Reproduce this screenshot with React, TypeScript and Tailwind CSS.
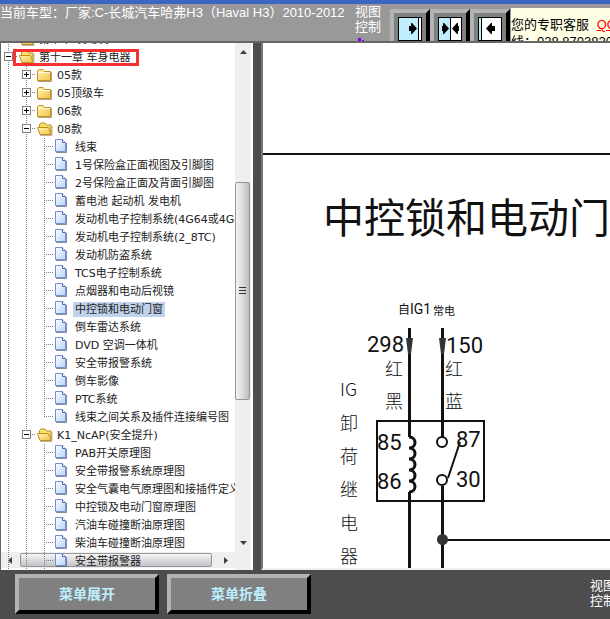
import type { ReactNode } from 'react';

type TreeKind = 'closed' | 'open' | 'file';

type TreeRow = {
  label: string;
  level: 0 | 1 | 2;
  kind: TreeKind;
  selected?: boolean;
  marked?: boolean;
  last?: boolean;
};

const rows: TreeRow[] = [
  { label: '第十章 发动机2008', level: 0, kind: 'open' },
  { label: '第十一章 车身电器', level: 0, kind: 'open', marked: true },
  { label: '05款', level: 1, kind: 'closed' },
  { label: '05顶级车', level: 1, kind: 'closed' },
  { label: '06款', level: 1, kind: 'closed' },
  { label: '08款', level: 1, kind: 'open' },
  { label: '线束', level: 2, kind: 'file' },
  { label: '1号保险盒正面视图及引脚图', level: 2, kind: 'file' },
  { label: '2号保险盒正面及背面引脚图', level: 2, kind: 'file' },
  { label: '蓄电池 起动机 发电机', level: 2, kind: 'file' },
  { label: '发动机电子控制系统(4G64或4G69)', level: 2, kind: 'file' },
  { label: '发动机电子控制系统(2_8TC)', level: 2, kind: 'file' },
  { label: '发动机防盗系统', level: 2, kind: 'file' },
  { label: 'TCS电子控制系统', level: 2, kind: 'file' },
  { label: '点烟器和电动后视镜', level: 2, kind: 'file' },
  { label: '中控锁和电动门窗', level: 2, kind: 'file', selected: true },
  { label: '倒车雷达系统', level: 2, kind: 'file' },
  { label: 'DVD 空调一体机', level: 2, kind: 'file' },
  { label: '安全带报警系统', level: 2, kind: 'file' },
  { label: '倒车影像', level: 2, kind: 'file' },
  { label: 'PTC系统', level: 2, kind: 'file' },
  { label: '线束之间关系及插件连接编号图', level: 2, kind: 'file', last: true },
  { label: 'K1_NcAP(安全提升)', level: 1, kind: 'open' },
  { label: 'PAB开关原理图', level: 2, kind: 'file' },
  { label: '安全带报警系统原理图', level: 2, kind: 'file' },
  { label: '安全气囊电气原理图和接插件定义', level: 2, kind: 'file' },
  { label: '中控锁及电动门窗原理图', level: 2, kind: 'file' },
  { label: '汽油车碰撞断油原理图', level: 2, kind: 'file' },
  { label: '柴油车碰撞断油原理图', level: 2, kind: 'file' },
  { label: '安全带报警器', level: 2, kind: 'file' },
];

function FolderIcon({ open }: { open: boolean }) {
  return (
    <svg width="18" height="18" viewBox="0 0 18 18" className="shrink-0" aria-hidden="true">
      <defs>
        <linearGradient id="folder" x1="0" y1="0" x2="1" y2="1">
          <stop offset="0" stopColor="#fff6b8" />
          <stop offset="1" stopColor="#f3c243" />
        </linearGradient>
      </defs>
      {open ? (
        <>
          <path d="M3.5 13.5v-9L5 3h4l1.5 2H15v8.500z" fill="#f7e070" stroke="#c08f1c" />
          <path d="M4 14.5 1.5 7.5h11l2.500 7z" fill="url(#folder)" stroke="#c08f1c" />
          <path d="M4 15.5h12V6" fill="none" stroke="#7a6848" strokeOpacity="0.5" />
        </>
      ) : (
        <>
          <path d="M1.5 14.5V5L3 3.5h4l1.5 2h6v9z" fill="url(#folder)" stroke="#c08f1c" />
          <path d="M2 6.5h12" stroke="#fffbe0" />
          <path d="M2 15.5h13.5V6" fill="none" stroke="#7a6848" strokeOpacity="0.6" />
        </>
      )}
    </svg>
  );
}

function FileIcon() {
  return (
    <svg width="18" height="18" viewBox="0 0 18 18" className="shrink-0" aria-hidden="true">
      <defs>
        <linearGradient id="page" x1="0" y1="0" x2="1" y2="1">
          <stop offset="0" stopColor="#ffffff" />
          <stop offset="1" stopColor="#b4d4fb" />
        </linearGradient>
      </defs>
      <path d="M1.5 1.5h7l3 3v9h-10z" fill="url(#page)" stroke="#7490d0" />
      <path d="M8.5 1.5v3h3" fill="#ffffff" stroke="#52659f" />
      <path d="M2 14.5h10.5V5" fill="none" stroke="#505878" strokeOpacity="0.7" />
    </svg>
  );
}

function Guide({ row, depth }: { row: TreeRow; depth: number }) {
  const own = depth === row.level;
  const toggle = own && row.kind !== 'file';
  return (
    <svg width="18" height="18" viewBox="0 0 18 18" className="shrink-0" aria-hidden="true">
      <path d={own && row.last ? 'M8.5 0v9' : 'M8.5 0v18'} stroke="#808080" strokeDasharray="1 1" />
      {own ? <path d="M10 8.5h8" stroke="#808080" strokeDasharray="1 1" /> : null}
      {toggle ? (
        <>
          <rect x="4.5" y="4.5" width="8" height="8" fill="#ffffff" stroke="#808080" />
          <path d={row.kind === 'closed' ? 'M6 8.5h5M8.5 6v5' : 'M6 8.5h5'} stroke="#000000" />
        </>
      ) : null}
    </svg>
  );
}

function TreeItem({ row }: { row: TreeRow }) {
  const depths = Array.from({ length: row.level + 1 }, (_, i) => i);
  return (
    <li className="relative flex h-[18px] items-center">
      {depths.map((depth) => (
        <Guide key={depth} row={row} depth={depth} />
      ))}
      {row.kind === 'file' ? <FileIcon /> : <FolderIcon open={row.kind === 'open'} />}
      <a
        href="#"
        className={`ml-px px-0.5 text-[11px] leading-[15px] whitespace-nowrap text-[#222222] ${row.selected ? 'bg-[#c0d2ec]' : ''}`}
      >
        {row.label}
      </a>
      {row.marked ? (
        <span className="absolute top-px left-[13px] h-[17px] w-[126px] border-3 border-[#f73131]" />
      ) : null}
    </li>
  );
}

function VerticalScrollbar() {
  return (
    <div className="relative z-20 flex w-[18px] shrink-0 flex-col border-r-2 border-white bg-[#efefef]">
      <div className="flex h-[18px] items-center justify-center">
        <svg width="7" height="4" aria-hidden="true">
          <path d="M3.5 0 7 4H0z" fill="#404040" />
        </svg>
      </div>
      <div className="mt-[121px] flex h-[218px] w-[15px] items-center justify-center rounded-xs border border-[#979797] bg-linear-to-r from-[#f5f5f5] via-[#dcdce0] to-[#bcbcc0]">
        <svg width="7" height="8" aria-hidden="true">
          <path d="M0 .5h7M0 3.5h7M0 6.5h7" stroke="#333333" />
        </svg>
      </div>
      <div className="mt-auto mb-[18px] flex h-[18px] items-center justify-center">
        <svg width="7" height="4" aria-hidden="true">
          <path d="M0 0h7L3.5 4z" fill="#404040" />
        </svg>
      </div>
    </div>
  );
}

function HorizontalScrollbar() {
  return (
    <div className="absolute inset-x-0 bottom-0 flex h-[18px] items-center border-b-2 border-white bg-[#efefef]">
      <div className="flex w-5 justify-center">
        <svg width="4" height="7" aria-hidden="true">
          <path d="M4 0v7L0 3.5z" fill="#404040" />
        </svg>
      </div>
      <div className="h-[14px] w-48 rounded-xs border border-[#979797] bg-linear-to-b from-[#f5f5f5] via-[#dcdce0] to-[#c4c4c8]" />
      <div className="flex w-7 justify-center">
        <svg width="4" height="7" aria-hidden="true">
          <path d="M0 0v7l4-3.5z" fill="#404040" />
        </svg>
      </div>
    </div>
  );
}

function BevelButton({ children, label, className }: { children: ReactNode; label?: string; className: string }) {
  return (
    <button
      type="button"
      aria-label={label}
      className={`flex shrink-0 items-center justify-center border-4 border-t-[#b3b3b3] border-r-black border-b-black border-l-[#b3b3b3] bg-[#808080] ${className}`}
    >
      {children}
    </button>
  );
}

function SplitIcon({ kind }: { kind: 'right' | 'both' | 'left' }) {
  const divider = { right: 21, both: 13, left: 4 }[kind];
  return (
    <svg width="24" height="24" viewBox="0 0 24 24" aria-hidden="true">
      <rect width="24" height="24" fill="#000000" />
      <rect x="1" y="1" width="22" height="22" fill="#ffffff" />
      <rect x="1" y="1" width={divider - 1} height="22" fill="#bfefff" />
      <path d={`M${divider - 0.5} 1v22`} stroke="#000000" />
      {kind === 'right' ? <path d="M11 9h2V6h1l5 5.5-5 5.5h-1v-3h-2z" /> : null}
      {kind === 'both' ? (
        <path d="M4 9h1V6h1l5 5.500L6 17H5v-3H4zM21 9h-1V6h-1l-5 5.500 5 5.500h1v-3h1z" />
      ) : null}
      {kind === 'left' ? <path d="M17 9h-3V6h-1l-5 5.5 5 5.5h1v-3h3z" /> : null}
    </svg>
  );
}

function Header() {
  return (
    <header className="flex h-[43px] shrink-0 overflow-hidden border-t-4 border-b-2 border-t-[#3c66c4] border-b-[#666666] bg-[#999999] text-[13px] text-white">
      <h1 className="w-[355px] shrink-0 leading-[18px] font-normal whitespace-nowrap">
        当前车型：厂家:C-长城汽车哈弗H3（Haval H3）2010-2012
      </h1>
      <div className="w-[35px] shrink-0 leading-[15px]">
        <p className="w-7">视图控制</p>
        <svg width="12" height="8" className="mt-1 ml-0.5" aria-hidden="true">
          <path d="M1 0h3v4H1zM5 2h2v2H5zM8 3h3v1H8z" fill="#8000ff" />
        </svg>
      </div>
      <div className="flex shrink-0 items-start pt-[5px]">
        <BevelButton label="展开左侧" className="h-10 w-10">
          <SplitIcon kind="right" />
        </BevelButton>
        <BevelButton label="左右均分" className="h-10 w-10">
          <SplitIcon kind="both" />
        </BevelButton>
        <BevelButton label="收起左侧" className="h-10 w-10">
          <SplitIcon kind="left" />
        </BevelButton>
      </div>
      <div className="mt-1 ml-px h-10 min-w-0 flex-1 overflow-hidden bg-[#ffffe6] pt-2 leading-[17px] whitespace-nowrap text-black">
        <p>
          您的专职客服{' '}
          <a href="#" className="ml-1 text-[#ff0000] underline">
            QQ
          </a>
        </p>
        <p>线：028 87038205</p>
      </div>
    </header>
  );
}

function WiringDiagram() {
  return (
    <svg width="347" height="525" viewBox="263 43 347 525" className="font-['Noto_Sans_CJK_SC',sans-serif]">
      <g fill="none" stroke="#111111" strokeWidth="2">
        <path d="M263 154h347" />
        <path d="M409.5 328v109M409.5 492v77M442.5 328v109M442.5 486v83" strokeWidth="3" />
        <rect x="377" y="421" width="107" height="80" />
        <path d="M409 437c8 0 8 11 0 11 8 0 8 11 0 11 8 0 8 11 0 11 8 0 8 11 0 11 8 0 8 11 0 11" strokeWidth="3" />
        <path d="M448 478l12-36M442 540h168" />
        <circle cx="442" cy="442" r="5" fill="#ffffff" />
        <circle cx="442" cy="480" r="5" fill="#ffffff" />
      </g>
      <g fill="#333333">
        <path d="M406 338h7l-2 16h-3zM439 338h7l-2 16h-3z" />
        <circle cx="442.5" cy="539.5" r="5.5" />
      </g>
      <g fill="#111111">
        <text x="323" y="233" fontSize="41">中控锁和电动门</text>
        <text x="398" y="314" fontSize="12">
          自<tspan fontFamily="Roboto" fontSize="14">IG1</tspan>
        </text>
        <text x="433" y="315" fontSize="11">常电</text>
        <g fontSize="22" fontFamily="Roboto">
          <text x="367" y="352">298</text>
          <text x="446" y="353">150</text>
          <text x="377" y="450">85</text>
          <text x="377" y="489">86</text>
          <text x="456" y="447">87</text>
          <text x="456" y="487">30</text>
        </g>
        <g fontSize="18" fontWeight="300">
          <text x="385" y="376">红</text>
          <text x="385" y="408">黑</text>
          <text x="445" y="376">红</text>
          <text x="445" y="408">蓝</text>
          <text x="340" y="396">IG</text>
          <text x="340" y="430">卸</text>
          <text x="340" y="463">荷</text>
          <text x="340" y="496">继</text>
          <text x="340" y="530">电</text>
          <text x="340" y="563">器</text>
        </g>
      </g>
    </svg>
  );
}

export default function App() {
  return (
    <div className="flex h-screen flex-col overflow-hidden bg-[#4d4d4d] font-['Liberation_Sans','Noto_Sans_CJK_SC',sans-serif]">
      <Header />
      <main className="flex min-h-0 flex-1">
        <nav className="relative flex w-[253px] shrink-0 overflow-hidden bg-white">
          <HorizontalScrollbar />
          <div className="relative z-10 min-w-0 flex-1 overflow-hidden border-l border-[#666666]">
            <ul className="-mt-[13px] -ml-px font-['DejaVu_Sans','Noto_Sans_CJK_SC',sans-serif]">
              {rows.map((row) => (
                <TreeItem key={row.label} row={row} />
              ))}
            </ul>
          </div>
          <VerticalScrollbar />
        </nav>
        <section className="ml-2 min-w-0 flex-1 overflow-hidden border-b-2 border-l-2 border-b-[#f0f0f0] border-l-[#777777] bg-white">
          <WiringDiagram />
        </section>
      </main>
      <footer className="flex h-[49px] shrink-0 items-start overflow-hidden pt-1 pl-[15px]">
        <div className="flex shrink-0 gap-2 text-sm font-bold text-[#bfefff]">
          <BevelButton className="h-10 w-36">菜单展开</BevelButton>
          <BevelButton className="h-10 w-36">菜单折叠</BevelButton>
        </div>
        <p className="-mr-2 ml-auto w-7 shrink-0 pt-1 text-[13px] leading-[15px] text-white">视图控制</p>
      </footer>
    </div>
  );
}
